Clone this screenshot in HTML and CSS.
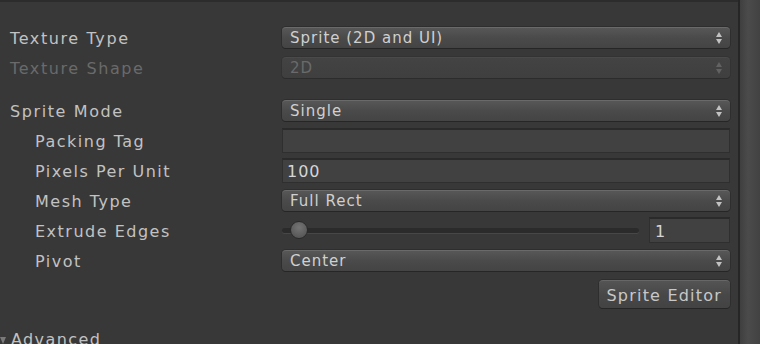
FILE: index.html
```html
<!DOCTYPE html>
<html>
<head>
<meta charset="utf-8">
<link rel="stylesheet" href="styles.css">
</head>
<body>
<div class="window">
  <div class="main">
    <div class="topband"></div>
    <div class="content">
      <div class="row r1">
        <div class="label">Texture Type</div>
        <div class="control"><div class="dropdown"><span>Sprite (2D and UI)</span><i class="arrows"></i></div></div>
      </div>
      <div class="row">
        <div class="label disabled">Texture Shape</div>
        <div class="control"><div class="dropdown off"><span>2D</span><i class="arrows"></i></div></div>
      </div>
      <div class="row r3">
        <div class="label">Sprite Mode</div>
        <div class="control"><div class="dropdown"><span>Single</span><i class="arrows"></i></div></div>
      </div>
      <div class="row">
        <div class="label indent">Packing Tag</div>
        <div class="control"><div class="field"></div></div>
      </div>
      <div class="row">
        <div class="label indent">Pixels Per Unit</div>
        <div class="control"><div class="field"><span>100</span></div></div>
      </div>
      <div class="row">
        <div class="label indent">Mesh Type</div>
        <div class="control"><div class="dropdown"><span>Full Rect</span><i class="arrows"></i></div></div>
      </div>
      <div class="row">
        <div class="label indent">Extrude Edges</div>
        <div class="control slidewrap">
          <div class="slider"><div class="track"></div><div class="knob"></div></div>
          <div class="field num"><span>1</span></div>
        </div>
      </div>
      <div class="row">
        <div class="label indent">Pivot</div>
        <div class="control"><div class="dropdown"><span>Center</span><i class="arrows"></i></div></div>
      </div>
      <div class="btnrow"><div class="button">Sprite Editor</div></div>
      <div class="advanced"><span class="tri"></span><span>Advanced</span></div>
    </div>
  </div>
  <div class="scrollbar"></div>
</div>
</body>
</html>
```

FILE: styles.css
```css
html, body {
  margin: 0;
  padding: 0;
  background: #383838;
}
body {
  width: 760px;
  height: 344px;
  overflow: hidden;
  font-family: "DejaVu Sans", sans-serif;
  font-size: 16px;
  color: #c2c2c2;
}
.window {
  display: flex;
  height: 344px;
}
.main {
  flex: 1;
  display: flex;
  flex-direction: column;
}
.topband {
  height: 4px;
  background: #414141;
  border-bottom: 2px solid #2c2c2c;
}
.content {
  padding: 21px 8px 0 0;
  display: flex;
  flex-direction: column;
}
.row {
  display: flex;
  align-items: center;
  height: 30px;
}
.r1 { height: 29px; }
.r3 { margin-top: 14px; height: 29px; }
.label {
  width: 282px;
  padding: 2px 0 0 10px;
  box-sizing: border-box;
  letter-spacing: 1.6px;
  white-space: nowrap;
}
.label.indent { padding-left: 35px; letter-spacing: 1.5px; }
.label.disabled { color: #6a6a6a; }
.control {
  flex: 1;
  display: flex;
  align-items: center;
}
.dropdown {
  flex: 1;
  height: 21px;
  box-sizing: border-box;
  display: flex;
  align-items: center;
  justify-content: space-between;
  padding: 0 8px 0 8px;
  border-radius: 4px;
  background: linear-gradient(#575757, #4a4a4a 50%, #444444);
  border-top: 1px solid #6a6a6a;
  box-shadow: 0 1px 0 #262626, 0 0 0 1px #2e2e2e;
  color: #d0d0d0;
  font-size: 15px;
  letter-spacing: 1px;
  margin: 1px 0;
}
.dropdown.off {
  background: linear-gradient(#434343, #3f3f3f);
  border-top: 1px solid #4a4a4a;
  box-shadow: 0 1px 0 #2c2c2c, 0 0 0 1px #333333;
  color: #6a6a6a;
}
.arrows {
  width: 6px;
  height: 12px;
  position: relative;
}
.arrows::before, .arrows::after {
  content: "";
  position: absolute;
  left: 0;
  border-left: 3px solid transparent;
  border-right: 3px solid transparent;
}
.arrows::before { top: 0; border-bottom: 5px solid #c2c2c2; }
.arrows::after { bottom: 0; border-top: 5px solid #c2c2c2; }
.off .arrows::before { border-bottom-color: #626262; }
.off .arrows::after { border-top-color: #626262; }
.field {
  flex: 1;
  height: 25px;
  box-sizing: border-box;
  background: #414141;
  border: 1px solid #2f2f2f;
  border-top: 2px solid #2a2a2a;
  display: flex;
  align-items: center;
  padding: 1px 0 0 4px;
  color: #d6d6d6;
  font-size: 16px;
  letter-spacing: 1px;
}
.slidewrap { gap: 10px; }
.slider {
  flex: 1;
  position: relative;
  height: 26px;
  display: flex;
  align-items: center;
}
.track {
  flex: 1;
  height: 5px;
  border-radius: 3px;
  background: #2b2b2b;
  box-shadow: 0 1px 0 #474747;
}
.knob {
  position: absolute;
  left: 8px;
  top: 4px;
  width: 16px;
  height: 16px;
  border-radius: 50%;
  background: radial-gradient(circle at 50% 35%, #757575, #5a5a5a 70%);
  border: 1px solid #2a2a2a;
}
.field.num {
  flex: 0 0 81px;
  height: 26px;
  padding-left: 5px;
}
.btnrow {
  display: flex;
  justify-content: flex-end;
  margin-top: 5px;
}
.button {
  height: 28px;
  box-sizing: border-box;
  padding: 1px 8px 0 8px;
  display: flex;
  align-items: center;
  border-radius: 4px;
  background: linear-gradient(#545454, #484848 50%, #434343);
  border-top: 1px solid #676767;
  box-shadow: 0 1px 0 #262626, 0 0 0 1px #2e2e2e;
  color: #c8c8c8;
  letter-spacing: 1.2px;
}
.advanced {
  margin-top: 21px;
  display: flex;
  align-items: center;
  gap: 5px;
  letter-spacing: 1.4px;
  height: 20px;
}
.tri {
  width: 0;
  height: 0;
  border-left: 3px solid transparent;
  border-right: 3px solid transparent;
  border-top: 7px solid #7a7a7a;
  margin-top: 2px;
}
.scrollbar {
  width: 20px;
  border-left: 2px solid #262626;
  background: linear-gradient(90deg, #3f3f3f, #4b4b4b 40%, #424242);
}
```
